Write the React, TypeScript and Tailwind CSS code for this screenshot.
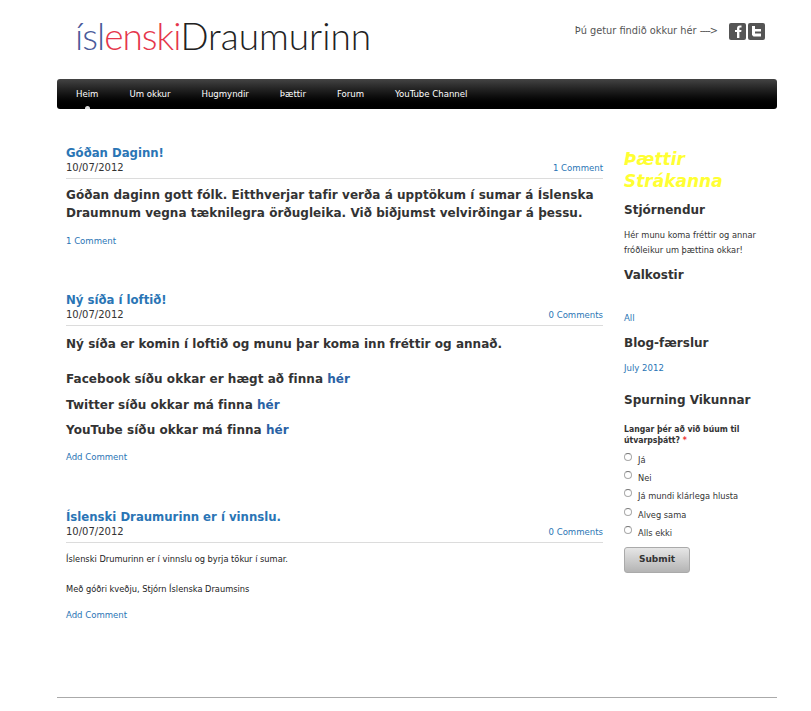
const navItems = ["Heim", "Um okkur", "Hugmyndir", "Þættir", "Forum", "YouTube Channel"];
const pollOptions = ["Já", "Nei", "Já mundi klárlega hlusta", "Alveg sama", "Alls ekki"];

function PostHead({ title, comments }: { title: string; comments: string }) {
  return (
    <div className="border-b border-[#dcdcdc] pb-[4px]">
      <h2 className="font-['DejaVu_Sans_Condensed',sans-serif] text-[13px] leading-[17px] font-bold text-[#2a75b5]">{title}</h2>
      <div className="flex justify-between text-[10px] leading-[13px] text-[#333]">
        <span>10/07/2012</span>
        <a className="font-['DejaVu_Sans_Condensed',sans-serif] text-[9.5px] text-[#2a75b5]">{comments}</a>
      </div>
    </div>
  );
}

function SideTitle({ children }: { children: string }) {
  return <h3 className="text-[12px] leading-[18px] font-bold text-[#333]">{children}</h3>;
}

export default function App() {
  return (
    <div className="min-h-[711px] bg-white font-['DejaVu_Sans',sans-serif] text-[#222]">
      <div className="ml-[57px] w-[720px]">
        {/* Header */}
        <header className="flex h-[79px] items-start justify-between">
          <div className="ml-[18px] mt-[14px] font-['Lato',sans-serif] text-[37px] leading-[44px] font-light">
            <span className="tracking-[-1px] text-[#4a5a9a]">ísl</span>
            <span className="tracking-[-1px] text-[#e5364b]">enski</span>
            <span className="text-[#222]">Draumurinn</span>
          </div>
          <div className="mr-[12px] mt-[23px] flex items-center">
            <span className="mr-[12px] text-[9.8px] text-[#555]">
              Þú getur findið okkur hér <span className="tracking-[-1px]">----&gt;</span>
            </span>
            <div className="flex gap-[2px]">
              <div className="flex h-[17px] w-[17px] items-center justify-center rounded-[2px] bg-[#555]">
                <svg width="8" height="13" viewBox="0 0 8 13">
                  <path d="M3 13V7H1V5h2V3.500C3 1.500 4 .5 6 .5h1.500v2H6.400c-.8 0-1 .3-1 1V5h2.100l-.3 2H5.400v6z" fill="#fff" />
                </svg>
              </div>
              <div className="flex h-[17px] w-[17px] items-center justify-center rounded-[2px] bg-[#555]">
                <svg width="11" height="11" viewBox="0 0 11 11">
                  <path d="M1 0h3v3h6v2.500H4V7.500h6V10.500H2.500L1 9z" fill="#fff" />
                </svg>
              </div>
            </div>
          </div>
        </header>

        {/* Nav */}
        <nav className="relative flex h-[30px] items-center rounded-[3px] bg-gradient-to-b from-[#444] to-black pl-[3.5px] font-['DejaVu_Sans_Condensed',sans-serif] text-[9.5px] text-white">
          {navItems.map((item) => (
            <a key={item} className="px-[15.5px]">
              {item}
            </a>
          ))}
          <span className="absolute bottom-0 left-[28px] h-[3px] w-[5px] rounded-t-full bg-[#ddd]" />
        </nav>

        <div className="mt-[35px] flex">
          {/* Main column */}
          <main className="ml-[9px] w-[537px]">
            <article className="h-[147px]">
              <PostHead title="Góðan Daginn!" comments="1 Comment" />
              <p className="mt-[7px] text-[12px] leading-[18px] font-bold tracking-[0.04px] text-[#333]">
                Góðan daginn gott fólk. Eitthverjar tafir verða á upptökum í sumar á Íslenska Draumnum vegna tæknilegra örðugleika. Við biðjumst velvirðingar á þessu.
              </p>
              <a className="mt-[12px] block font-['DejaVu_Sans_Condensed',sans-serif] text-[9.5px] leading-[13px] text-[#2a75b5]">
                1 Comment
              </a>
            </article>

            <article className="h-[217px]">
              <PostHead title="Ný síða í loftið!" comments="0 Comments" />
              <p className="mt-[9px] text-[12px] leading-[18px] font-bold tracking-[0.04px] text-[#333]">
                Ný síða er komin í loftið og munu þar koma inn fréttir og annað.
              </p>
              <div className="mt-[17px] flex flex-col gap-[7.500px] text-[12px] leading-[18px] font-bold tracking-[0.04px] text-[#333]">
                <p>Facebook síðu okkar er hægt að finna <a className="text-[#2a62a5]">hér</a></p>
                <p>Twitter síðu okkar má finna <a className="text-[#2a62a5]">hér</a></p>
                <p>YouTube síðu okkar má finna <a className="text-[#2a62a5]">hér</a></p>
              </div>
              <a className="mt-[11px] block font-['DejaVu_Sans_Condensed',sans-serif] text-[9.5px] leading-[13px] text-[#2a75b5]">
                Add Comment
              </a>
            </article>

            <article>
              <PostHead title="Íslenski Draumurinn er í vinnslu." comments="0 Comments" />
              <p className="mt-[9px] font-['DejaVu_Sans_Condensed',sans-serif] text-[9.2px] leading-[13px] text-[#222]">
                Íslenski Drumurinn er í vinnslu og byrja tökur í sumar.
              </p>
              <p className="mt-[17px] font-['DejaVu_Sans_Condensed',sans-serif] text-[9.2px] leading-[13px] text-[#222]">
                Með góðri kveðju, Stjórn Íslenska Draumsins
              </p>
              <a className="mt-[13px] block font-['DejaVu_Sans_Condensed',sans-serif] text-[9.5px] leading-[13px] text-[#2a75b5]">
                Add Comment
              </a>
            </article>
          </main>

          {/* Sidebar */}
          <aside className="ml-[21px] w-[153px]">
            <h2 className="mt-[4px] w-[130px] text-[17px] leading-[22px] font-bold italic text-[#ffff33]">
              Þættir Strákanna
            </h2>
            <div className="mt-[9px]">
              <SideTitle>Stjórnendur</SideTitle>
            </div>
            <p className="mt-[8px] font-['DejaVu_Sans_Condensed',sans-serif] text-[9.2px] leading-[15px] text-[#333]">
              Hér munu koma fréttir og annar fróðleikur um þættina okkar!
            </p>
            <div className="mt-[9px]">
              <SideTitle>Valkostir</SideTitle>
            </div>
            <a className="mt-[27px] block font-['DejaVu_Sans_Condensed',sans-serif] text-[9.5px] leading-[13px] text-[#2a75b5]">All</a>
            <div className="mt-[10px]">
              <SideTitle>Blog-færslur</SideTitle>
            </div>
            <a className="mt-[9px] block font-['DejaVu_Sans_Condensed',sans-serif] text-[9.5px] leading-[13px] text-[#2a75b5]">July 2012</a>
            <div className="mt-[17px]">
              <SideTitle>Spurning Vikunnar</SideTitle>
            </div>
            <p className="mt-[15px] w-[125px] font-['DejaVu_Sans_Condensed',sans-serif] text-[8.6px] leading-[11px] font-bold text-[#333]">
              Langar þér að við búum til útvarpsþátt? <span className="text-[#e33]">*</span>
            </p>
            <ul className="mt-[7px] flex flex-col gap-[5.200px] font-['DejaVu_Sans_Condensed',sans-serif] text-[9.2px] leading-[13px] text-[#333]">
              {pollOptions.map((option) => (
                <li key={option} className="flex items-center gap-[5px]">
                  <span className="-mt-[5px] h-[8px] w-[8px] rounded-full border border-[#aaa] border-t-[#777] bg-white" />
                  <span className="ml-[1px]">{option}</span>
                </li>
              ))}
            </ul>
            <button className="mt-[8px] h-[26px] w-[66px] rounded-[3px] border border-[#aaa] bg-gradient-to-b from-[#e6e6e6] to-[#b4b4b4] text-[9px] font-bold text-[#333]">
              Submit
            </button>
          </aside>
        </div>

        <div className="mt-[76px] border-t border-[#aaa]" />
      </div>
    </div>
  );
}
